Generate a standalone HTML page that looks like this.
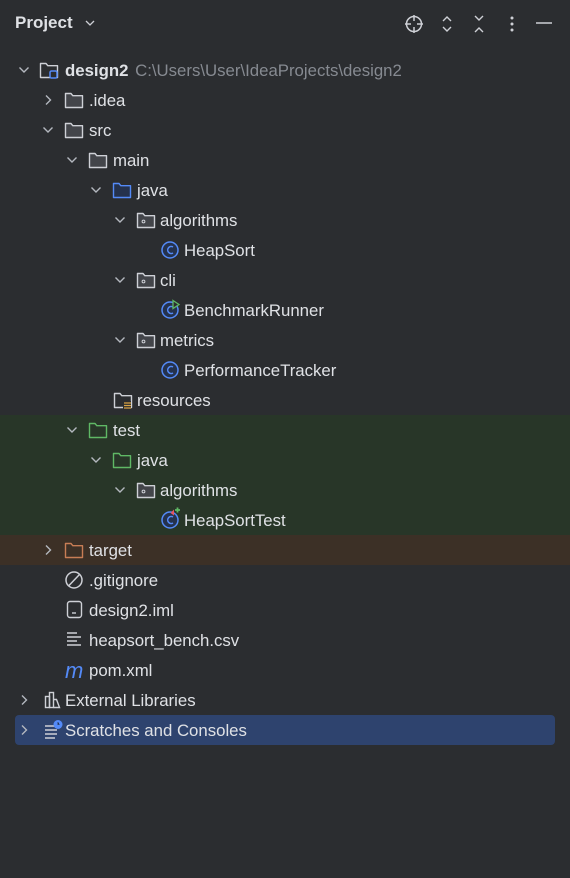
<!DOCTYPE html>
<html><head><meta charset="utf-8"><style>
body{margin:0;width:570px;height:878px;background:#2b2d30;font-family:"Liberation Sans",sans-serif;color:#dfe1e5;position:relative;overflow:hidden}
.bg{position:absolute;left:0;width:570px;height:30px}
.row{position:absolute;height:30px;line-height:31px;font-size:16.8px;white-space:nowrap}
</style></head><body>
<div class="bg" style="top:415px;height:120px;background:#283628"></div>
<div class="bg" style="top:535px;background:#3c3026"></div>
<div style="position:absolute;left:15px;top:715px;width:540px;height:30px;background:#2e436e;border-radius:4px"></div>

<div style="position:absolute;left:15px;top:13px;font-size:17px;font-weight:bold;color:#dfe1e5">Project</div>
<svg style="position:absolute;left:84px;top:18px" width="12" height="10"><path d="M2 3 L6 7 L10 3" stroke="#ced0d6" stroke-width="1.3" fill="none"/></svg>
<svg style="position:absolute;left:403px;top:13px" width="22" height="22"><circle cx="11" cy="11" r="7.5" stroke="#ced0d6" stroke-width="1.5" fill="none"/><path d="M11 2v6M11 14v6M2 11h6M14 11h6" stroke="#ced0d6" stroke-width="1.5"/></svg>
<svg style="position:absolute;left:438px;top:13px" width="18" height="22"><path d="M5 8l4-4 4 4M5 14l4 4 4-4" stroke="#ced0d6" stroke-width="1.4" fill="none"/></svg>
<svg style="position:absolute;left:470px;top:13px" width="18" height="22"><path d="M5 3l4 4 4-4M5 19l4-4 4 4" stroke="#ced0d6" stroke-width="1.4" fill="none"/></svg>
<svg style="position:absolute;left:505px;top:13px" width="14" height="22"><circle cx="7" cy="5" r="1.5" fill="#ced0d6"/><circle cx="7" cy="11" r="1.5" fill="#ced0d6"/><circle cx="7" cy="17" r="1.5" fill="#ced0d6"/></svg>
<svg style="position:absolute;left:534px;top:13px" width="20" height="22"><path d="M2 10h16" stroke="#ced0d6" stroke-width="1.5"/></svg>

<svg width="570" height="878" style="position:absolute;left:0;top:0">
<defs>
<path id="down" d="M-4.5 -2.5 L0 2 L4.5 -2.5" fill="none" stroke="#b4b8bf" stroke-width="1.4"/>
<path id="right" d="M-2 -4.5 L2.5 0 L-2 4.5" fill="none" stroke="#b4b8bf" stroke-width="1.4"/>
<path id="fold" d="M0 0 h5.5 l1.8 2.2 h9.7 v11.8 h-17 z" stroke-width="1.4" stroke-linejoin="round"/>
</defs>
<use href="#down" x="24" y="70"/>
<use href="#right" x="48" y="100"/>
<use href="#down" x="48" y="130"/>
<use href="#down" x="72" y="160"/>
<use href="#down" x="96" y="190"/>
<use href="#down" x="120" y="220"/>
<use href="#down" x="120" y="280"/>
<use href="#down" x="120" y="340"/>
<use href="#down" x="72" y="430"/>
<use href="#down" x="96" y="460"/>
<use href="#down" x="120" y="490"/>
<use href="#right" x="48" y="550"/>
<use href="#right" x="24" y="700"/>
<use href="#right" x="24" y="730"/>
<!-- folders -->
<use href="#fold" x="40.5" y="63.5" stroke="#ced0d6" fill="none"/>
<rect x="50" y="71" width="7" height="7" rx="1.5" fill="#2b2d30" stroke="#548af7" stroke-width="1.5"/>
<g stroke="#ced0d6" fill="#43454a">
<use href="#fold" x="65.5" y="93.5"/><use href="#fold" x="65.5" y="123.5"/><use href="#fold" x="89.5" y="153.5"/>
<use href="#fold" x="137.5" y="213.5"/><use href="#fold" x="137.5" y="273.5"/><use href="#fold" x="137.5" y="333.5"/><use href="#fold" x="137.5" y="483.5"/>
</g>
<use href="#fold" x="113.5" y="183.5" stroke="#548af7" fill="#25324d"/>
<g fill="none" stroke="#ced0d6"><circle cx="143.5" cy="221.5" r="1.4"/><circle cx="143.5" cy="281.5" r="1.4"/><circle cx="143.5" cy="341.5" r="1.4"/><circle cx="143.5" cy="491.5" r="1.4"/></g>
<use href="#fold" x="114.5" y="393.5" stroke="#ced0d6" fill="none"/>
<rect x="123" y="401" width="8" height="8" fill="#2b2d30"/><path d="M124 403h7M124 405.5h7M124 408h7" stroke="#d9a343" stroke-width="1.2"/>
<g stroke="#5fb865" fill="none"><use href="#fold" x="89.5" y="423.5"/><use href="#fold" x="113.5" y="453.5"/></g>
<use href="#fold" x="65.5" y="543.5" stroke="#c77d55" fill="none"/>
<!-- class icons -->
<g fill="#25324d" stroke="#548af7" stroke-width="1.5">
<circle cx="170" cy="250" r="8"/><circle cx="170" cy="310" r="8"/><circle cx="170" cy="370" r="8"/><circle cx="170" cy="520" r="8"/></g>
<g fill="none" stroke="#548af7" stroke-width="1.5">
<path d="M173 247 a3.5 3.5 0 1 0 0 6"/><path d="M173 307 a3.5 3.5 0 1 0 0 6"/><path d="M173 367 a3.5 3.5 0 1 0 0 6"/><path d="M173 517 a3.5 3.5 0 1 0 0 6"/></g>
<path d="M173 300.5 l6 4 -6 4z" fill="#2b2d30" stroke="#5fb865" stroke-width="1.3"/>
<path d="M170.5 513 l3.5 -3.5 v6z" fill="#e55765"/><path d="M175 510 h5 M177.5 507.5 v5" stroke="#5fb865" stroke-width="1.8"/>
<!-- files -->
<circle cx="74" cy="580" r="8" fill="none" stroke="#ced0d6" stroke-width="1.5"/><path d="M69 585.5 L79.5 574.5" stroke="#ced0d6" stroke-width="1.5"/>
<rect x="67.5" y="601.5" width="14" height="16" rx="2.5" fill="none" stroke="#ced0d6" stroke-width="1.4"/><path d="M72 613h4" stroke="#ced0d6" stroke-width="1.4"/>
<path d="M67 633h10M67 637h14M67 641h10M67 645h14" stroke="#ced0d6" stroke-width="1.4"/>
<text x="65" y="678" font-family="Liberation Sans" font-style="italic" font-size="22" fill="#548af7">m</text>
<g stroke="#ced0d6" fill="none" stroke-width="1.4"><rect x="45.5" y="696.5" width="4" height="11"/><rect x="49.5" y="692.5" width="4" height="15"/><path d="M53.5 699.5 h3 l3 8 h-6"/></g>
<path d="M45 726h10M45 730h12M45 734h12M45 738h10" stroke="#ced0d6" stroke-width="1.4"/>
<circle cx="58" cy="724.5" r="4.5" fill="#548af7"/><path d="M58 722v2.5h1.5" stroke="#2e436e" stroke-width="1"/>
</svg>

<div class="row" style="top:55px;left:65px"><b>design2</b> <span style="color:#868a91;margin-left:2px">C:\Users\User\IdeaProjects\design2</span></div>
<div class="row" style="top:85px;left:89px">.idea</div>
<div class="row" style="top:115px;left:89px">src</div>
<div class="row" style="top:145px;left:113px">main</div>
<div class="row" style="top:175px;left:137px">java</div>
<div class="row" style="top:205px;left:160px">algorithms</div>
<div class="row" style="top:235px;left:184px">HeapSort</div>
<div class="row" style="top:265px;left:160px">cli</div>
<div class="row" style="top:295px;left:184px">BenchmarkRunner</div>
<div class="row" style="top:325px;left:160px">metrics</div>
<div class="row" style="top:355px;left:184px">PerformanceTracker</div>
<div class="row" style="top:385px;left:137px">resources</div>
<div class="row" style="top:415px;left:113px">test</div>
<div class="row" style="top:445px;left:137px">java</div>
<div class="row" style="top:475px;left:160px">algorithms</div>
<div class="row" style="top:505px;left:184px">HeapSortTest</div>
<div class="row" style="top:535px;left:89px">target</div>
<div class="row" style="top:565px;left:89px">.gitignore</div>
<div class="row" style="top:595px;left:89px">design2.iml</div>
<div class="row" style="top:625px;left:89px">heapsort_bench.csv</div>
<div class="row" style="top:655px;left:89px">pom.xml</div>
<div class="row" style="top:685px;left:65px">External Libraries</div>
<div class="row" style="top:715px;left:65px">Scratches and Consoles</div>
</body></html>
